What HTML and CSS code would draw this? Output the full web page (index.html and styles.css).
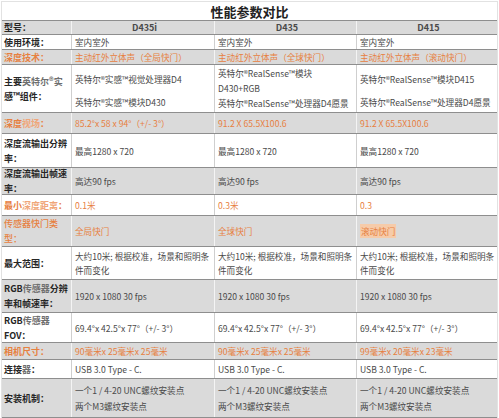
FILE: index.html
```html
<!DOCTYPE html>
<html lang="zh">
<head>
<meta charset="utf-8">
<link rel="stylesheet" href="styles.css">
</head>
<body>
<div class="sheet">
  <div class="title">性能参数对比</div>
  <div class="table">
    <div class="row g h-head">
      <div class="lab">型号：</div>
      <div class="val c head">D435i</div>
      <div class="val c head">D435</div>
      <div class="val c head">D415</div>
    </div>
    <div class="row h-env">
      <div class="lab">使用环境：</div>
      <div class="val">室内室外</div>
      <div class="val">室内室外</div>
      <div class="val">室内室外</div>
    </div>
    <div class="row g o h-env">
      <div class="lab">深度技术：</div>
      <div class="val">主动红外立体声（全局快门）</div>
      <div class="val">主动红外立体声（全球快门）</div>
      <div class="val">主动红外立体声（滚动快门）</div>
    </div>
    <div class="row h-comp">
      <div class="lab">主要<span class="dim">英特尔®实</span><br>感™组件：</div>
      <div class="val split"><span>英特尔®实感™视觉处理器D4</span><span>英特尔®实感™模块D430</span></div>
      <div class="val stack"><span>英特尔®RealSense™模块</span><span>D430+RGB</span><span>英特尔®RealSense™处理器D4愿景</span></div>
      <div class="val split"><span>英特尔®RealSense™模块D415</span><span>英特尔®RealSense™处理器D4愿景</span></div>
    </div>
    <div class="row g o h-fov">
      <div class="lab">深度<span class="light">视场</span>：</div>
      <div class="val">85.2°x 58 x 94°（+/- 3°）</div>
      <div class="val">91.2 X 65.5X100.6</div>
      <div class="val">91.2 X 65.5X100.6</div>
    </div>
    <div class="row h-res">
      <div class="lab">深度流输出分辨<br>率：</div>
      <div class="val">最高1280 x 720</div>
      <div class="val">最高1280 x 720</div>
      <div class="val">最高1280 x 720</div>
    </div>
    <div class="row g h-fps">
      <div class="lab">深度流输出帧速<br>率：</div>
      <div class="val">高达90 fps</div>
      <div class="val">高达90 fps</div>
      <div class="val">高达90 fps</div>
    </div>
    <div class="row o h-min">
      <div class="lab">最小<span class="light">深度距离</span>：</div>
      <div class="val">0.1米</div>
      <div class="val">0.3米</div>
      <div class="val">0.3</div>
    </div>
    <div class="row g o h-shut">
      <div class="lab thin">传感器快门类<br>型：</div>
      <div class="val">全局快门</div>
      <div class="val">全球快门</div>
      <div class="val"><span class="mark">滚动快门</span></div>
    </div>
    <div class="row h-range">
      <div class="lab">最大范围：</div>
      <div class="val">大约10米; 根据校准，场景和照明条<br>件而变化</div>
      <div class="val">大约10米; 根据校准，场景和照明条<br>件而变化</div>
      <div class="val">大约10米; 根据校准，场景和照明条<br>件而变化</div>
    </div>
    <div class="row g h-rgb">
      <div class="lab">RGB<span class="dim">传感器</span>分辨<br>率和帧速率：</div>
      <div class="val">1920 x 1080 30 fps</div>
      <div class="val">1920 x 1080 30 fps</div>
      <div class="val">1920 x 1080 30 fps</div>
    </div>
    <div class="row h-rfov">
      <div class="lab">RGB<span class="dim">传感器</span><br>FOV：</div>
      <div class="val">69.4°x 42.5°x 77°（+/- 3°）</div>
      <div class="val">69.4°x 42.5°x 77°（+/- 3°）</div>
      <div class="val">69.4°x 42.5°x 77°（+/- 3°）</div>
    </div>
    <div class="row g o h-size">
      <div class="lab">相机尺寸：</div>
      <div class="val">90毫米x 25毫米x 25毫米</div>
      <div class="val">90毫米x 25毫米x 25毫米</div>
      <div class="val">99毫米x 20毫米x 23毫米</div>
    </div>
    <div class="row h-conn">
      <div class="lab">连接<span class="dim">器</span>：</div>
      <div class="val">USB 3.0 Type - C.</div>
      <div class="val">USB 3.0 Type - C.</div>
      <div class="val">USB 3.0 Type - C.</div>
    </div>
    <div class="row g h-mount">
      <div class="lab">安装机制：</div>
      <div class="val stack wide"><span>一个1 / 4-20 UNC螺纹安装点</span><span>两个M3螺纹安装点</span></div>
      <div class="val stack wide"><span>一个1 / 4-20 UNC螺纹安装点</span><span>两个M3螺纹安装点</span></div>
      <div class="val stack wide"><span>一个1 / 4-20 UNC螺纹安装点</span><span>两个M3螺纹安装点</span></div>
    </div>
  </div>
</div>
</body>
</html>
```

FILE: styles.css
```css
* { box-sizing: border-box; }
html, body { margin: 0; padding: 0; background: #fff; }
body {
  width: 499px;
  height: 418px;
  overflow: hidden;
  font-family: "Noto Sans CJK SC", "Noto Sans", sans-serif;
  font-size: 9px;
  color: #444;
}
.sheet {
  margin: 1px 1px 0 1px;
  border: 1px solid #e2e2e2;
  border-bottom: none;
}
.title {
  height: 18px;
  display: flex;
  align-items: center;
  justify-content: center;
  font-size: 13px;
  font-weight: 700;
  color: #222;
  padding-top: 1px;
}
.table { display: flex; flex-direction: column; }
.row {
  display: grid;
  grid-template-columns: 69px 143px 142px 141px;
  border-top: 1px solid #8e8e8e;
  background: #fff;
}
.row.g { background: #dadada; }
.row .lab {
  display: block;
  align-self: center;
  padding-left: 2px;
  font-weight: 700;
  color: #262626;
  line-height: 15px;
  white-space: nowrap;
  overflow: hidden;
}
.row .val {
  display: flex;
  align-items: center;
  padding-left: 3px;
  border-left: 1px solid #cfcfcf;
  line-height: 14px;
  white-space: nowrap;
  overflow: hidden;
  font-size: 8.6px;
  color: #4a4a4a;
}
.row.g .val { border-left-color: #f4f4f4; }
.row .val.c { justify-content: center; }
.row .val.head { font-weight: 700; font-size: 9px; color: #4a4a4a; }
.row.o .lab, .row.o .val { color: #e7803f; }
.row.o .lab .light { color: #f0a679; }
.row.o .lab.thin { font-weight: 500; }
.dim { color: #6e6e6e; }
.mark { background: #f6cba9; padding: 0 1px; }
.val.split {
  flex-direction: column;
  align-items: flex-start;
  justify-content: space-between;
  padding-top: 7px;
  padding-bottom: 3px;
}
.val.stack {
  flex-direction: column;
  align-items: flex-start;
  justify-content: center;
  line-height: 15px;
}
.val.wide { line-height: 16px; }

.h-head { height: 14px; }
.h-head .lab, .h-head .val { line-height: 12px; }
.h-env { height: 15px; }
.h-comp { height: 48px; }
.h-fov { height: 21px; }
.h-res { height: 34px; }
.h-fps { height: 27px; }
.h-min { height: 21px; }
.h-shut { height: 31px; }
.h-range { height: 33px; }
.h-rgb { height: 33px; }
.h-rfov { height: 30px; }
.h-size { height: 17px; }
.h-conn { height: 19px; }
.h-mount { height: 40px; border-bottom: 1px solid #8e8e8e; }
```
